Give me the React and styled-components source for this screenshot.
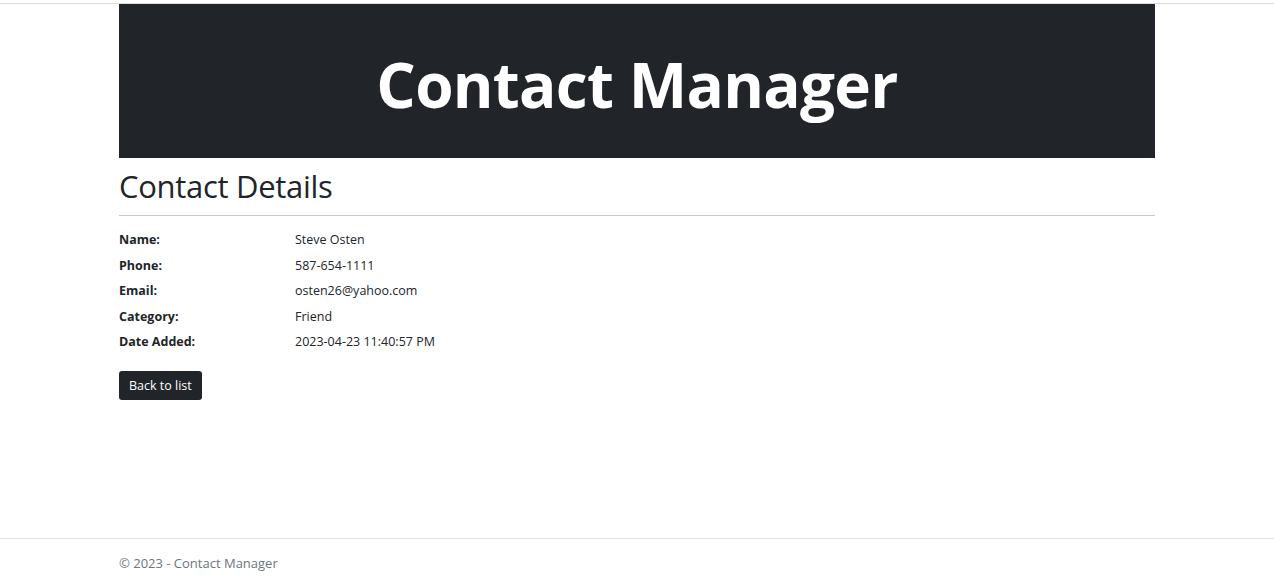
import React from "react";
import styled, { createGlobalStyle } from "styled-components";

const Global = createGlobalStyle`
  html, body { margin: 0; padding: 0; }
  body {
    font-family: "Open Sans", "Noto Sans", sans-serif;
    color: #212529;
    background: #fff;
  }
`;

const Page = styled.div`
  min-height: 100vh;
  display: flex;
  flex-direction: column;
`;

const TopBar = styled.header`
  height: 3px;
  border-bottom: 1px solid #dcdcdc;
`;

const Container = styled.main`
  width: 1036px;
  margin: 0 auto;
`;

const Banner = styled.div`
  height: 154px;
  background: #212529;
  display: flex;
  align-items: center;
  justify-content: center;
`;

const Title = styled.h1`
  margin: 0;
  padding-top: 5px;
  color: #fff;
  font-size: 62px;
  font-weight: 700;
  line-height: 1;
  letter-spacing: -0.7px;
`;

const Heading = styled.h2`
  margin: 9px 0 0;
  font-size: 31px;
  font-weight: 400;
  line-height: 38px;
  letter-spacing: -0.3px;
`;

const Rule = styled.hr`
  margin: 10px 0 14px;
  border: 0;
  border-top: 1px solid #c8c8c8;
`;

const Details = styled.dl`
  display: grid;
  grid-template-columns: 176px 1fr;
  row-gap: 6.5px;
  margin: 0;
  font-size: 12.5px;
  line-height: 19px;
`;

const Label = styled.dt`
  font-weight: 700;
  margin: 0;
`;

const Value = styled.dd`
  margin: 0;
`;

const Button = styled.button`
  margin-top: 20px;
  height: 29px;
  padding: 0 10px;
  border: 0;
  border-radius: 3px;
  background: #212529;
  color: #fff;
  font-family: inherit;
  font-size: 12.5px;
  cursor: pointer;
`;

const Footer = styled.footer`
  margin-top: auto;
  border-top: 1px solid #dee2e6;
  height: 47px;
  display: flex;
  align-items: center;
`;

const FooterInner = styled.div`
  width: 1036px;
  margin: 0 auto;
  color: #6c757d;
  font-size: 13px;
`;

const rows = [
  ["Name:", "Steve Osten"],
  ["Phone:", "587-654-1111"],
  ["Email:", "osten26@yahoo.com"],
  ["Category:", "Friend"],
  ["Date Added:", "2023-04-23 11:40:57 PM"],
];

export default function App() {
  return (
    <Page>
      <Global />
      <TopBar />
      <Container>
        <Banner>
          <Title>Contact Manager</Title>
        </Banner>
        <Heading>Contact Details</Heading>
        <Rule />
        <Details>
          {rows.map(([l, v]) => (
            <React.Fragment key={l}>
              <Label>{l}</Label>
              <Value>{v}</Value>
            </React.Fragment>
          ))}
        </Details>
        <Button>Back to list</Button>
      </Container>
      <Footer>
        <FooterInner>© 2023 - Contact Manager</FooterInner>
      </Footer>
    </Page>
  );
}
